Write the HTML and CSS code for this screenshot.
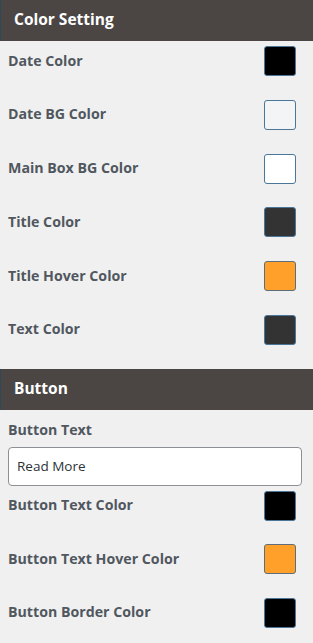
FILE: index.html
```html
<!DOCTYPE html>
<html>
<head>
<meta charset="utf-8">
<link rel="stylesheet" href="styles.css">
</head>
<body>
<div class="panel">
  <div class="section-head">Color Setting</div>
  <div class="section">
    <div class="row"><span class="label">Date Color</span><span class="swatch sw-black"></span></div>
    <div class="row"><span class="label">Date BG Color</span><span class="swatch sw-light"></span></div>
    <div class="row"><span class="label">Main Box BG Color</span><span class="swatch sw-white"></span></div>
    <div class="row"><span class="label">Title Color</span><span class="swatch sw-dark"></span></div>
    <div class="row"><span class="label">Title Hover Color</span><span class="swatch sw-orange"></span></div>
    <div class="row"><span class="label">Text Color</span><span class="swatch sw-dark"></span></div>
  </div>
  <div class="section-head">Button</div>
  <div class="section section-btn">
    <div class="field-label">Button Text</div>
    <input class="text-input" type="text" value="Read More">
    <div class="rows">
      <div class="row"><span class="label">Button Text Color</span><span class="swatch sw-black"></span></div>
      <div class="row"><span class="label">Button Text Hover Color</span><span class="swatch sw-orange"></span></div>
      <div class="row"><span class="label">Button Border Color</span><span class="swatch sw-black"></span></div>
    </div>
  </div>
</div>
</body>
</html>
```
FILE: styles.css
```css
* { box-sizing: border-box; }
html, body { margin: 0; padding: 0; background: #f0f0f1; }
body { font-family: "Open Sans", "Noto Sans", sans-serif; }
.panel { width: 313px; }
.section-head {
  height: 41px;
  line-height: 39px;
  background: #4b4644;
  border-left: 1px solid #30495a;
  color: #ffffff;
  font-weight: 700;
  font-size: 15.5px;
  padding-left: 13px;
}
.section {
  display: flex;
  flex-direction: column;
  gap: 23.8px;
  padding: 5px 17px 24px 8px;
}
.section-btn { gap: 0; padding-top: 0; }
.rows { display: flex; flex-direction: column; gap: 23.5px; margin-top: 5px; }
.row {
  display: flex;
  align-items: center;
  justify-content: space-between;
  height: 30px;
}
.label, .field-label {
  font-size: 14.2px;
  font-weight: 700;
  color: #50575e;
}
.row .label { position: relative; top: -1px; }
.field-label { margin-top: 10px; line-height: 20px; }
.swatch {
  width: 32px;
  height: 30px;
  border: 1px solid #4a7699;
  border-radius: 3px;
}
.sw-black { background: #000000; }
.sw-light { background: #f2f4f6; }
.sw-white { background: #ffffff; }
.sw-dark { background: #333333; }
.sw-orange { background: #fea02a; border-color: #5f6f7a; }
.text-input {
  display: block;
  margin-top: 7px;
  width: 294px;
  height: 39px;
  border: 1px solid #8c8f94;
  border-radius: 4px;
  background: #fff;
  padding: 0 8px;
  font-family: "Open Sans", "Noto Sans", sans-serif;
  font-size: 13.5px;
  color: #2c3338;
}
```
